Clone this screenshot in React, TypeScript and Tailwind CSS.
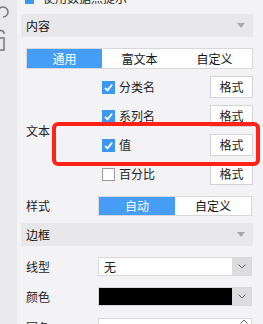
import { useState } from "react";

const font = { fontFamily: '"Noto Sans CJK SC", "Noto Sans", sans-serif' };

const Check = ({ on }: { on: boolean }) =>
  on ? (
    <span className="w-[13px] h-[13px] bg-[#3d97f2] flex items-center justify-center shrink-0">
      <svg width="11" height="11" viewBox="0 0 11 11">
        <path d="M2 5.8 L4.5 8.3 L9.2 2.5" stroke="#fff" strokeWidth="1.8" fill="none" />
      </svg>
    </span>
  ) : (
    <span className="w-[13px] h-[13px] bg-white border border-[#9a9a9a] shrink-0" />
  );

const FormatButton = () => (
  <button className="w-[43px] h-[22px] bg-white border border-[#d4d4d6] text-[12px] text-[#222] leading-none">
    格式
  </button>
);

const SectionHeader = ({ title }: { title: string }) => (
  <div className="h-[23px] bg-[#e8e8ea] flex items-center justify-between pl-[5px] pr-[8px] text-[12px] text-[#111]">
    <span>{title}</span>
    <svg width="8" height="5" viewBox="0 0 8 5">
      <path d="M0 0 H8 L4 5 Z" fill="#a8a8aa" />
    </svg>
  </div>
);

const Chevron = () => (
  <svg width="8" height="5" viewBox="0 0 8 5">
    <path d="M0.5 0.5 L4 4 L7.5 0.5" stroke="#666" strokeWidth="1" fill="none" />
  </svg>
);

export default function App() {
  const [tab, setTab] = useState(0);
  const [style, setStyle] = useState(0);
  const rows = [
    { label: "分类名", on: true },
    { label: "系列名", on: true },
    { label: "值", on: true },
    { label: "百分比", on: false },
  ];

  return (
    <div className="relative w-[263px] h-[324px] overflow-hidden flex items-start bg-[#f3f3f6]" style={font}>
      {/* left toolbar strip */}
      <div className="w-[17px] h-full bg-[#e9e9eb] shrink-0 relative">
        <svg width="17" height="60" viewBox="0 0 17 60" className="absolute left-0 top-0">
          <path d="M-2 12 A5 5 0 1 1 3 17" stroke="#777" strokeWidth="1.5" fill="none" />
          <path d="M-2 38 H4 V50 H-2" stroke="#777" strokeWidth="1.5" fill="none" />
          <path d="M-2 33 A3 3 0 0 1 4 34" stroke="#777" strokeWidth="1.5" fill="none" />
        </svg>
      </div>

      <div className="flex-1 pl-[4px] pr-[11px] text-[12px] text-[#222]">
        {/* cut-off top option */}
        <div className="h-[14px] flex">
          <div className="relative -top-[9px] h-[13px] flex items-center pl-[4px] gap-[9px]">
            <span className="w-[9px] h-[13px] bg-[#3d97f2]" />
            <span className="leading-[13px]">使用数据点提示</span>
          </div>
        </div>

        <SectionHeader title="内容" />

        <div className="pl-[5px]">
          <div className="mt-[11px] h-[21px] w-[227px] flex border border-[#d8d8da] bg-white">
            {["通用", "富文本", "自定义"].map((t, i) => (
              <button
                key={t}
                onClick={() => setTab(i)}
                className={`flex-1 text-[12px] leading-none ${
                  tab === i ? "bg-[#459df5] text-white" : "bg-white text-[#111]"
                }`}
              >
                {t}
              </button>
            ))}
          </div>

          <div className="mt-[7px] flex">
            <div className="w-[76px] flex items-center">文本</div>
            <div className="flex-1 flex flex-col gap-[7px]">
              {rows.map((r) => (
                <div key={r.label} className="h-[22px] flex items-center justify-between">
                  <div className="flex items-center gap-[4px]">
                    <Check on={r.on} />
                    <span>{r.label}</span>
                  </div>
                  <FormatButton />
                </div>
              ))}
            </div>
          </div>

          <div className="mt-[11px] flex items-center">
            <div className="w-[72px]">样式</div>
            <div className="h-[20px] w-[154px] flex bg-white border border-[#d8d8da]">
              {["自动", "自定义"].map((t, i) => (
                <button
                  key={t}
                  onClick={() => setStyle(i)}
                  className={`flex-1 text-[12px] leading-none ${
                    style === i ? "bg-[#459df5] text-white" : "bg-white text-[#111]"
                  }`}
                >
                  {t}
                </button>
              ))}
            </div>
          </div>
        </div>

        <div className="mt-[7px]">
          <SectionHeader title="边框" />
        </div>

        <div className="pl-[5px]">
          <div className="mt-[11px] flex items-center">
            <div className="w-[72px]">线型</div>
            <div className="h-[19px] w-[154px] flex border border-[#d8d8da] bg-white">
              <div className="flex-1 pl-[5px] flex items-center">无</div>
              <div className="w-[19px] bg-[#dcdcde] flex items-center justify-center">
                <Chevron />
              </div>
            </div>
          </div>

          <div className="mt-[11px] flex items-center">
            <div className="w-[72px]">颜色</div>
            <div className="h-[19px] w-[154px] flex border border-[#d8d8da] bg-white">
              <div className="flex-1 bg-black" />
              <div className="w-[19px] bg-[#dcdcde] flex items-center justify-center">
                <Chevron />
              </div>
            </div>
          </div>

          <div className="mt-[12px] flex items-center">
            <div className="w-[72px]">圆角</div>
            <div className="h-[19px] w-[154px] flex border border-[#d8d8da] bg-white">
              <div className="flex-1 pl-[5px] flex items-center">0</div>
              <div className="w-[14px] flex items-start justify-center">
                <svg width="8" height="5" viewBox="0 0 8 5">
                  <path d="M0.5 4.5 L4 1 L7.5 4.5" stroke="#666" strokeWidth="1" fill="none" />
                </svg>
              </div>
            </div>
          </div>
        </div>
      </div>

      {/* red highlight annotation */}
      <div className="absolute left-[52px] top-[122px] w-[208px] h-[44px] border-[4px] border-[#ff2219] rounded-[6px] pointer-events-none" />
    </div>
  );
}
